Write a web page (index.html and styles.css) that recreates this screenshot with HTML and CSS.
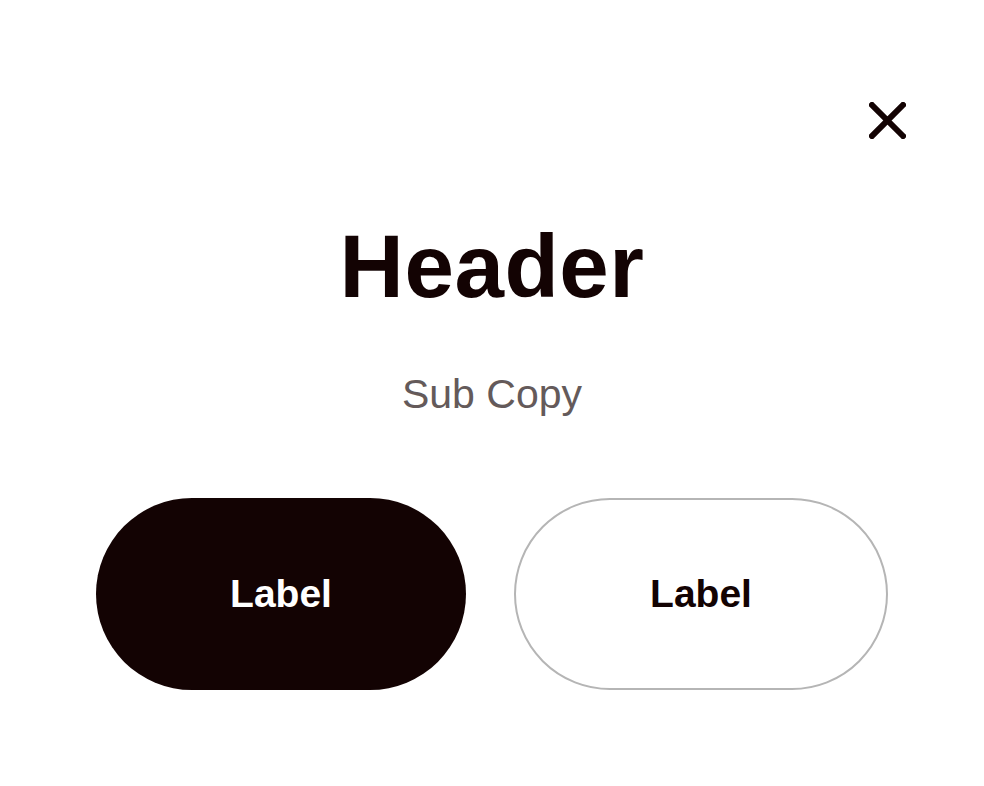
FILE: index.html
```html
<!doctype html>
<html>
<head>
    <title>Dialog</title>
    <link rel="stylesheet" href="styles.css">
</head>
<body>
    <div class = "dialog">
        <div class = "dialog__top">
            <a href = "#" class = "dialog__close" aria-label = "Close">
                <svg width = "37" height = "37" viewBox = "0 0 37 37">
                    <path d = "M3 3 L34 34 M34 3 L3 34" stroke = "#130303" stroke-width = "6" stroke-linecap = "square" fill = "none"/>
                </svg>
            </a>
        </div>
        <h1 class = "dialog__title">Header</h1>
        <p class = "dialog__sub">Sub Copy</p>
        <div class = "dialog__actions">
            <a href = "#" class = "btn btn--primary">Label</a>
            <a href = "#" class = "btn btn--secondary">Label</a>
        </div>
    </div>
</body>
</html>
```

FILE: styles.css
```css
* {
    box-sizing: border-box;
}

body {
    margin: 0;
    background: #fff;
    font-family: "Liberation Sans", Arial, sans-serif;
    color: #130303;
}

.dialog {
    width: 984px;
    height: 786px;
}

.dialog__top {
    display: flex;
    justify-content: flex-end;
    padding: 102px 78px 0 0;
}

.dialog__close {
    display: block;
    width: 37px;
    height: 37px;
}

.dialog__close svg {
    display: block;
}

.dialog__title {
    margin: 83px 0 0;
    font-size: 89px;
    line-height: 1;
    font-weight: 700;
    text-align: center;
    letter-spacing: 0.5px;
}

.dialog__sub {
    margin: 63px 0 0;
    font-size: 41px;
    line-height: 1;
    color: #645a5a;
    text-align: center;
}

.dialog__actions {
    display: flex;
    gap: 48px;
    margin-top: 83px;
    padding: 0 96px;
}

.btn {
    flex: 1 1 0;
    height: 192px;
    border-radius: 96px;
    display: flex;
    align-items: center;
    justify-content: center;
    text-decoration: none;
    font-size: 39px;
    font-weight: 700;
}

.btn--primary {
    background: #130303;
    color: #fff;
}

.btn--secondary {
    border: 2px solid #b5b5b5;
    color: #130303;
}
```
